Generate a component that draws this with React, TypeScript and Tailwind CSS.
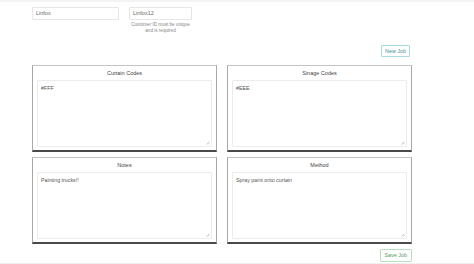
import React from "react";

const Grip = () => (
  <svg className="absolute right-[1px] bottom-[1px]" width="4" height="4" viewBox="0 0 4 4">
    <path d="M0.5 3.5 L3.5 0.5 M2 3.5 L3.5 2" stroke="#999" strokeWidth="0.5" />
  </svg>
);

function Card({ title, value }: { title: string; value: string }) {
  return (
    <div className="flex flex-col h-[87px] border border-[#a8a8a8] border-t-[#c4c4c4] border-b-[2px] border-b-[#4a4a4a] bg-white px-[4px] pb-[3px]">
      <div className="h-[14px] pt-[4px] text-center text-[5.5px] leading-[6px] text-[#444]">{title}</div>
      <div className="relative flex-1 border border-[#ececec] rounded-[1px] px-[3px] pt-[4px] text-[5.3px] leading-[6px] text-[#555]">
        {value}
        <Grip />
      </div>
    </div>
  );
}

export default function App() {
  return (
    <div className="w-[474px] h-[264px] bg-white relative overflow-hidden" style={{ fontFamily: '"Liberation Sans", Arial, sans-serif' }}>
      <div className="h-[2px] bg-[#f3f3f3]" />
      <div className="ml-[32px] w-[380px]">
        <div className="flex gap-[10px] mt-[5px]">
          <div className="w-[87px] h-[13px] border border-[#e6e6e6] rounded-[1px] px-[3px] text-[5.5px] leading-[11px] text-[#666]">Linfox</div>
          <div className="flex flex-col items-center">
            <div className="w-[63px] h-[13px] border border-[#e6e6e6] rounded-[1px] px-[3px] text-[5.5px] leading-[11px] text-[#666]">Linfox12</div>
            <div className="mt-[2px] text-center text-[4.6px] leading-[6px] text-[#888] whitespace-nowrap">
              Customer ID must be unique
              <br />
              and is required
            </div>
          </div>
        </div>
        <div className="flex justify-end mt-[11px] pr-[2px]">
          <div className="h-[12px] px-[3px] border border-[#a6dbe2] rounded-[1px] text-[5.4px] leading-[10px] text-[#4a8f99]">New Job</div>
        </div>
        <div className="grid grid-cols-2 gap-x-[10px] gap-y-[5px] mt-[8px]">
          <Card title="Curtain Codes" value="#FFF" />
          <Card title="Sinage Codes" value="#EEE" />
          <Card title="Notes" value="Painting trucks!!" />
          <Card title="Method" value="Spray paint onto curtain" />
        </div>
        <div className="flex justify-end mt-[5px]">
          <div className="h-[13px] px-[4px] border border-[#b6e0bf] rounded-[1px] text-[5.4px] leading-[11px] text-[#5a9a66]">Save Job</div>
        </div>
      </div>
      <div className="absolute left-0 right-0 bottom-0 h-[1px] bg-[#eeeeee]" />
    </div>
  );
}
